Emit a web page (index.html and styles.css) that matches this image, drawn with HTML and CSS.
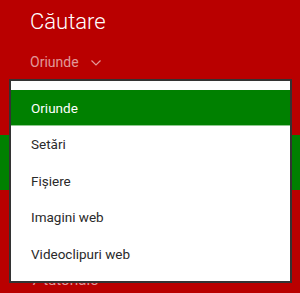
FILE: index.html
```html
<!DOCTYPE html>
<html lang="ro">
<head>
  <meta charset="UTF-8" />
  <title>Căutare</title>
  <link rel="stylesheet" href="styles.css">
</head>
<body>

<header class="search-head">
  <h1>Căutare</h1>
  <div class="scope">Oriunde
    <svg class="chevron" width="10" height="6" viewBox="0 0 10 6"><path d="M0.5 0.5 L5 5 L9.5 0.5" fill="none" stroke="currentColor" stroke-width="1.2"/></svg>
  </div>
</header>

<section class="results">
  <div class="result selected"></div>
  <div class="result"></div>
  <div class="result small">7 tutoriale</div>
</section>

<ul class="menu">
  <li class="active">Oriunde</li>
  <li>Setări</li>
  <li>Fișiere</li>
  <li>Imagini web</li>
  <li>Videoclipuri web</li>
</ul>

</body>
</html>
```

FILE: styles.css
```css
body {
  margin: 0;
  background-color: #b90000;
  font-family: Roboto, 'Open Sans', sans-serif;
  color: #fff;
  height: 293px;
  overflow: hidden;
  position: relative;
}
.search-head {
  padding: 8px 0 0 30px;
}
.search-head h1 {
  margin: 0;
  font-size: 22px;
  font-weight: 300;
  line-height: 28px;
}
.scope {
  margin-top: 17px;
  font-size: 14px;
  line-height: 18px;
  color: rgba(255, 255, 255, 0.6);
  display: flex;
  align-items: center;
  gap: 12px;
}
.chevron {
  margin-top: 2px;
}
.results {
  margin-top: 64px;
}
.result {
  height: 55px;
}
.result.selected {
  background-color: #008000;
}
.result.small {
  padding-left: 31px;
  font-size: 15px;
  color: rgba(255, 255, 255, 0.6);
  line-height: 20px;
  height: auto;
  margin-top: 25px;
}
.menu {
  position: absolute;
  left: 9px;
  top: 79px;
  width: 279px;
  margin: 0;
  padding: 9px 0;
  list-style: none;
  background: #fff;
  border: 2px solid #333;
}
.menu li {
  height: 36.4px;
  line-height: 36px;
  padding-left: 20px;
  font-size: 13.5px;
  color: #2a2a2a;
  box-sizing: border-box;
}
.menu li.active {
  background-color: #008000;
  color: #fff;
  border-bottom: 1px solid #8fc88f;
}
```
